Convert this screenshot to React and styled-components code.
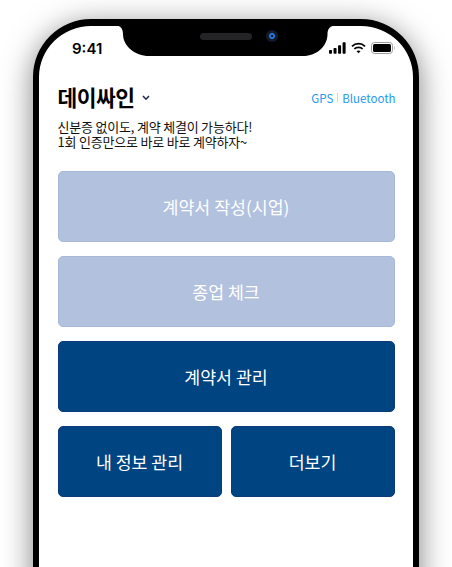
import React from 'react';
import styled, { createGlobalStyle } from 'styled-components';

const GlobalStyle = createGlobalStyle`
  html, body {
    margin: 0;
    padding: 0;
    background: #ffffff;
    overflow: hidden;
  }
  body {
    font-family: "Noto Sans CJK KR", "Noto Sans", sans-serif;
  }
`;

const Page = styled.div`
  width: 452px;
  height: 567px;
  overflow: hidden;
  padding: 19px 33px 0;
  box-sizing: border-box;
`;

const Phone = styled.div`
  position: relative;
  width: 386px;
  height: 640px;
  box-sizing: border-box;
  border: solid #000000;
  border-width: 7px 6.5px;
  border-radius: 58px;
  background: #ffffff;
  box-shadow: 0 6px 30px rgba(0, 0, 0, 0.5);
  padding: 0 18.5px;
`;

const Notch = styled.svg`
  position: absolute;
  left: 74px;
  top: -1px;
`;

const Speaker = styled.div`
  position: absolute;
  left: 160.5px;
  top: 6.5px;
  width: 52px;
  height: 7px;
  border-radius: 4px;
  background: #242426;
`;

const Camera = styled.div`
  position: absolute;
  left: 226.5px;
  top: 4px;
  width: 12px;
  height: 12px;
  border-radius: 50%;
  background: radial-gradient(circle, #0e1a2c 0 0.7px, #2a70cc 1.2px 2.6px, #101a2a 3.6px 6px);
`;

const StatusBar = styled.div`
  display: flex;
  justify-content: space-between;
  align-items: center;
  height: 30px;
  margin: 7px -18.5px 0;
  padding: 0 18px 0 33px;
  box-sizing: border-box;
`;

const Clock = styled.span`
  font-family: "Inter", "Liberation Sans", sans-serif;
  font-size: 15px;
  font-weight: 600;
  color: #000000;
`;

const StatusIcons = styled.div`
  display: flex;
  align-items: center;
  gap: 5px;
`;

const Header = styled.div`
  display: flex;
  justify-content: space-between;
  align-items: center;
  margin-top: 17px;
  height: 32px;
`;

const Brand = styled.div`
  display: flex;
  align-items: center;
  gap: 7px;
`;

const Title = styled.h1`
  margin: 0;
  font-size: 21.5px;
  font-weight: 700;
  letter-spacing: -0.5px;
  color: #000000;
`;

const Chevron = styled.svg`
  margin-top: 3px;
`;

const Links = styled.div`
  display: flex;
  align-items: center;
  gap: 4px;
  margin: 3px -1px 0 0;
  font-size: 11.5px;
  color: #2299ee;
`;

const Divider = styled.span`
  width: 1px;
  height: 9px;
  background: #d5d5d5;
`;

const Intro = styled.p`
  margin: 7px 0 0;
  font-size: 13px;
  line-height: 15px;
  letter-spacing: -0.2px;
  color: #111111;
`;

const Actions = styled.div`
  display: grid;
  grid-template-columns: 1fr 1fr;
  gap: 14px 9px;
  margin-top: 22px;
`;

const Action = styled.button`
  grid-column: ${(props) => (props.$half ? 'auto' : '1 / -1')};
  height: 71px;
  padding: 0;
  border: 1px solid ${(props) => (props.$muted ? '#a7b8d8' : '#0d3a78')};
  border-radius: 5px;
  background: ${(props) => (props.$muted ? '#b2c1de' : '#004481')};
  color: #ffffff;
  font-family: inherit;
  font-size: 17.3px;
  font-weight: 400;
`;

const App = () => {
  return (
    <Page>
      <GlobalStyle />
      <Phone>
        <Notch width="226" height="32" viewBox="0 0 226 32">
          <path d="M0 0 H226 C218 0 214.5 3 214.5 9 C214.5 21 204 31 190 31 H36 C22 31 10 21 10 9 C10 3 7 0 0 0 Z" fill="#000000" />
        </Notch>
        <Speaker />
        <Camera />
        <StatusBar>
          <Clock>9:41</Clock>
          <StatusIcons>
            <svg width="17" height="12" viewBox="0 0 18 12">
              <rect x="0" y="8" width="3.2" height="4" rx="0.8" fill="#000" />
              <rect x="4.8" y="6" width="3.2" height="6" rx="0.8" fill="#000" />
              <rect x="9.6" y="3" width="3.2" height="9" rx="0.8" fill="#000" />
              <rect x="14.4" y="0" width="3.2" height="12" rx="0.8" fill="#000" />
            </svg>
            <svg width="15" height="12" viewBox="0 0 16 12" fill="none" stroke="#000" strokeWidth="1.8">
              <path d="M1 4.2 C5 0.4 11 0.4 15 4.2" />
              <path d="M3.6 6.9 C6 4.7 10 4.7 12.4 6.9" />
              <path d="M8 11.6 L5.9 9.4 C7 8.4 9 8.4 10.1 9.4 Z" fill="#000" stroke="none" />
            </svg>
            <svg width="24" height="12" viewBox="0 0 24 12">
              <rect x="0.5" y="0.5" width="21" height="11" rx="3" fill="none" stroke="#9a9a9a" />
              <rect x="2" y="2" width="18" height="8" rx="1.6" fill="#000" />
              <path d="M23 4 C23.8 4.4 23.8 7.6 23 8 Z" fill="#9a9a9a" />
            </svg>
          </StatusIcons>
        </StatusBar>
        <Header>
          <Brand>
            <Title>데이싸인</Title>
            <Chevron width="8" height="6" viewBox="0 0 8 6" fill="none" stroke="#1d2a44" strokeWidth="1.5">
              <path d="M1 1 L4 4.2 L7 1" />
            </Chevron>
          </Brand>
          <Links>
            <span>GPS</span>
            <Divider />
            <span>Bluetooth</span>
          </Links>
        </Header>
        <Intro>
          신분증 없이도, 계약 체결이 가능하다!
          <br />
          1회 인증만으로 바로 바로 계약하자~
        </Intro>
        <Actions>
          <Action $muted>계약서 작성(시업)</Action>
          <Action $muted>종업 체크</Action>
          <Action>계약서 관리</Action>
          <Action $half>내 정보 관리</Action>
          <Action $half>더보기</Action>
        </Actions>
      </Phone>
    </Page>
  );
};

export default App;
